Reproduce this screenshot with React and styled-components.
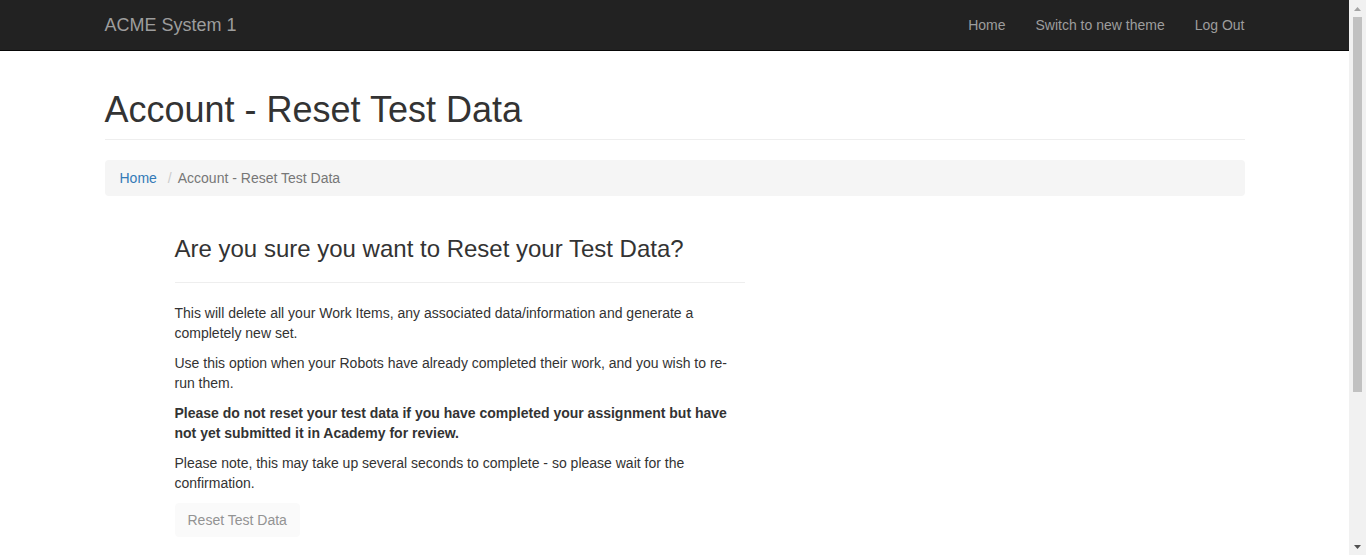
import React from 'react'
import styled, { createGlobalStyle } from 'styled-components'

const GlobalStyle = createGlobalStyle`
  html, body {
    margin: 0;
    padding: 0;
  }
  body {
    margin-right: 17px;
    font-family: "Liberation Sans", Arial, Helvetica, sans-serif;
    font-size: 14px;
    line-height: 1.42857143;
    color: #333;
    background: #fff;
  }
  * {
    box-sizing: border-box;
  }
`

const Navbar = styled.nav`
  background: #222;
  border-bottom: 1px solid #080808;
  height: 51px;
  margin-bottom: 20px;
`

const Container = styled.div`
  width: 1170px;
  margin: 0 auto;
  padding: 0 15px;
`

const NavInner = styled(Container)`
  display: flex;
  justify-content: space-between;
  align-items: flex-start;
`

const Brand = styled.a`
  display: block;
  height: 50px;
  padding: 15px 15px;
  margin-left: -15px;
  font-size: 18px;
  line-height: 20px;
  color: #9d9d9d;
  text-decoration: none;
`

const NavList = styled.ul`
  display: flex;
  list-style: none;
  margin: 0 -15px 0 0;
  padding: 0;
`

const NavLink = styled.a`
  display: block;
  padding: 15px;
  line-height: 20px;
  color: #9d9d9d;
  text-decoration: none;
`

const Main = styled(Container)`
  padding-bottom: 210px;
`

const PageHeader = styled.div`
  margin: 39px 0 20px;
  padding-bottom: 9px;
  border-bottom: 1px solid #eee;
`

const Title = styled.h1`
  margin: 0;
  font-size: 36px;
  font-weight: 500;
  line-height: 1.1;
  color: #333;
`

const Breadcrumb = styled.ol`
  display: flex;
  list-style: none;
  margin: 0 0 20px;
  padding: 8px 15px;
  background: #f5f5f5;
  border-radius: 4px;
`

const Crumb = styled.li`
  color: ${p => (p.active ? '#777' : '#337ab7')};

  &:not(:first-child)::before {
    content: "/";
    padding: 0 6px 0 11px;
    color: #ccc;
  }
`

const CrumbLink = styled.a`
  color: #337ab7;
  text-decoration: none;
`

const Panel = styled.section`
  display: flow-root;
  width: 570px;
  margin-left: 70px;
`

const Question = styled.h3`
  margin: 20px 0 10px;
  font-size: 24px;
  font-weight: 500;
  line-height: 1.1;
`

const Rule = styled.hr`
  margin: 20px 0;
  border: 0;
  border-top: 1px solid #eee;
`

const Para = styled.p`
  margin: 0 0 10px;
  font-weight: ${p => (p.strong ? 700 : 400)};
`

const Button = styled.button`
  display: inline-block;
  padding: 6px 12px;
  font-family: inherit;
  font-size: 14px;
  line-height: 1.42857143;
  color: #939393;
  background: #fafafa;
  border: 1px solid #fafafa;
  border-radius: 4px;
  cursor: not-allowed;
`

/* imitation of the browser's vertical scrollbar, lying over the right edge */
const ScrollTrack = styled.div`
  position: fixed;
  top: 0;
  right: 0;
  width: 17px;
  height: 100vh;
  background: #f1f1f1;
  display: flex;
  flex-direction: column;
  align-items: center;
`

const ScrollArrow = styled.div`
  width: 17px;
  height: 17px;
  display: flex;
  align-items: center;
  justify-content: center;
  flex-shrink: 0;
`

const ScrollThumb = styled.div`
  width: 9px;
  height: 375px;
  background: #c1c1c1;
`

const ScrollRest = styled.div`
  flex: 1;
`

const navItems = ['Home', 'Switch to new theme', 'Log Out']

function Scrollbar() {
  return (
    <ScrollTrack>
      <ScrollArrow>
        <svg width="9" height="6" viewBox="0 0 9 6">
          <path d="M4.5 1 L8 5 L1 5 Z" fill="#a3a3a3" />
        </svg>
      </ScrollArrow>
      <ScrollThumb />
      <ScrollRest />
      <ScrollArrow>
        <svg width="9" height="6" viewBox="0 0 9 6">
          <path d="M1 1 L8 1 L4.5 5 Z" fill="#505050" />
        </svg>
      </ScrollArrow>
    </ScrollTrack>
  )
}

export default function App() {
  return (
    <>
      <GlobalStyle />
      <Navbar>
        <NavInner>
          <Brand href="#">ACME System 1</Brand>
          <NavList>
            {navItems.map(item => (
              <li key={item}>
                <NavLink href="#">{item}</NavLink>
              </li>
            ))}
          </NavList>
        </NavInner>
      </Navbar>
      <Main>
        <PageHeader>
          <Title>Account - Reset Test Data</Title>
        </PageHeader>
        <Breadcrumb>
          <Crumb><CrumbLink href="#">Home</CrumbLink></Crumb>
          <Crumb active>Account - Reset Test Data</Crumb>
        </Breadcrumb>
        <Panel>
          <Question>Are you sure you want to Reset your Test Data?</Question>
          <Rule />
          <Para>
            This will delete all your Work Items, any associated data/information and generate a completely new set.
          </Para>
          <Para>
            Use this option when your Robots have already completed their work, and you wish to re-run them.
          </Para>
          <Para strong>
            Please do not reset your test data if you have completed your assignment but have not yet submitted it in Academy for review.
          </Para>
          <Para>
            Please note, this may take up several seconds to complete - so please wait for the confirmation.
          </Para>
          <Button disabled>Reset Test Data</Button>
        </Panel>
      </Main>
      <Scrollbar />
    </>
  )
}
